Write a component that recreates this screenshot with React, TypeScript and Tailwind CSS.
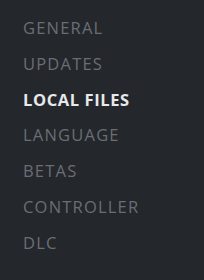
const items = ['GENERAL', 'UPDATES', 'LOCAL FILES', 'LANGUAGE', 'BETAS', 'CONTROLLER', 'DLC'];
const active = 'LOCAL FILES';

export default function App() {
  return (
    <div className="h-[280px] w-[204px] overflow-hidden bg-[#24272c] pl-[23px] pt-[10px] font-['Open_Sans',sans-serif]">
      <ul className="flex flex-col">
        {items.map((item) => (
          <li
            key={item}
            className={
              item === active
                ? 'text-[16.5px] leading-[35.75px] font-bold tracking-[0.6px] text-[#e8e9ea]'
                : 'text-[16.5px] leading-[35.75px] font-medium tracking-[1.2px] text-[#6a6e74]'
            }
          >
            {item}
          </li>
        ))}
      </ul>
    </div>
  );
}
